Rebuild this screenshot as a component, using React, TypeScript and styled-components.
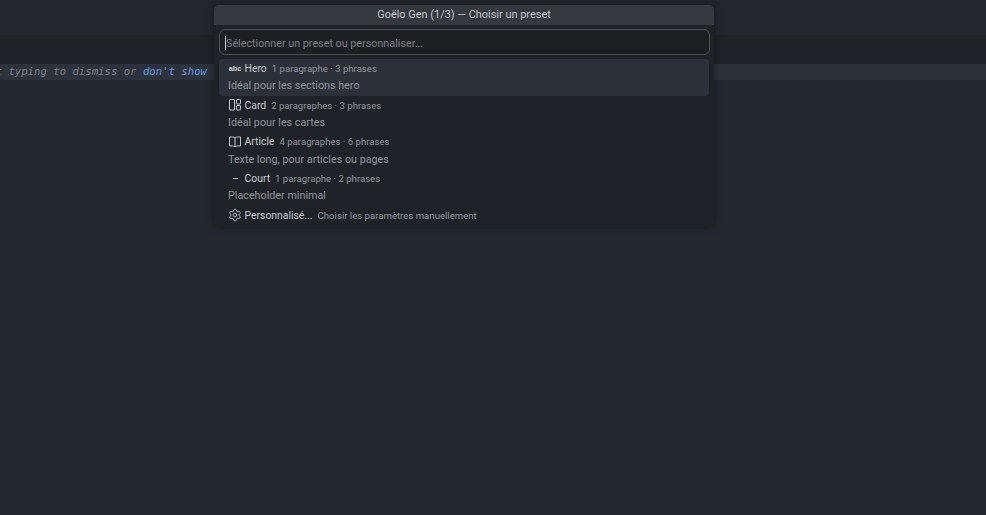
import React from "react";
import styled, { createGlobalStyle } from "styled-components";
import { Settings } from "lucide-react";

const GlobalStyle = createGlobalStyle`
  html, body {
    margin: 0;
    height: 100%;
    background: #23272f;
    overflow: hidden;
  }
`;

const CardIcon = () => (
  <svg width="14" height="14" viewBox="0 0 14 14" fill="none" stroke="currentColor" strokeWidth="1">
    <rect x="1.5" y="1.5" width="5" height="10.5" rx="0.5" />
    <rect x="8.5" y="1.5" width="4" height="4.5" rx="0.5" />
    <rect x="8.5" y="7.5" width="4" height="4.5" rx="0.5" />
  </svg>
);

const BookIcon = () => (
  <svg width="14" height="14" viewBox="0 0 14 14" fill="none" stroke="currentColor" strokeWidth="1">
    <path d="M7 3C6.2 2.3 5.2 2 4 2H1.5v9H4.5c1 0 1.8.2 2.5.8.7-.6 1.5-.8 2.5-.8h3V2H10c-1.2 0-2.2.3-3 1z" />
    <path d="M7 3v8.8" />
  </svg>
);

type Preset = {
  icon: React.ReactNode;
  label: string;
  detail: string;
  description?: string;
  active?: boolean;
};

const presets: Preset[] = [
  {
    icon: <AbcGlyph>abc</AbcGlyph>,
    label: "Hero",
    detail: "1 paragraphe · 3 phrases",
    description: "Idéal pour les sections hero",
    active: true,
  },
  {
    icon: <CardIcon />,
    label: "Card",
    detail: "2 paragraphes · 3 phrases",
    description: "Idéal pour les cartes",
  },
  {
    icon: <BookIcon />,
    label: "Article",
    detail: "4 paragraphes · 6 phrases",
    description: "Texte long, pour articles ou pages",
  },
  {
    icon: <DashGlyph />,
    label: "Court",
    detail: "1 paragraphe · 2 phrases",
    description: "Placeholder minimal",
  },
  {
    icon: <Settings size={14} strokeWidth={1.5} />,
    label: "Personnalisé...",
    detail: "Choisir les paramètres manuellement",
  },
];

export default function App() {
  return (
    <Page>
      <GlobalStyle />
      <TitleBar />
      <TabStrip />
      <EditorLine>
        <Ghost>
          Start typing to dismiss or <GhostLink>don't show</GhostLink>
        </Ghost>
      </EditorLine>
      <Palette>
        <PaletteTitle>Goëlo Gen (1/3) — Choisir un preset</PaletteTitle>
        <InputWrap>
          <Input placeholder="Sélectionner un preset ou personnaliser..." />
          <Caret />
        </InputWrap>
        <List>
          {presets.map((p) => (
            <Row key={p.label} $active={p.active} $tall={!!p.description}>
              <RowMain>
                <IconSlot>{p.icon}</IconSlot>
                <Label>{p.label}</Label>
                <Detail>{p.detail}</Detail>
              </RowMain>
              {p.description && <Description>{p.description}</Description>}
            </Row>
          ))}
        </List>
      </Palette>
    </Page>
  );
}

function AbcGlyph({ children }: { children: React.ReactNode }) {
  return <Abc>{children}</Abc>;
}

function DashGlyph() {
  return <Dash />;
}

const Page = styled.div`
  position: relative;
  width: 986px;
  height: 515px;
  background: #23272f;
  font-family: Roboto, "Liberation Sans", sans-serif;
  overflow: hidden;
`;

const TitleBar = styled.div`
  height: 35px;
  background: #23262f;
`;

const TabStrip = styled.div`
  height: 29px;
  background: #1f2227;
`;

const EditorLine = styled.div`
  height: 16px;
  background: #2d313c;
  display: flex;
  justify-content: flex-end;
  align-items: center;
  padding-right: 779px;
  white-space: nowrap;
`;

const Ghost = styled.span`
  font-family: "DejaVu Sans Mono", monospace;
  font-style: italic;
  font-size: 10.65px;
  line-height: 14px;
  margin-top: -1px;
  color: #7b7f88;
`;

const GhostLink = styled.span`
  color: #4fa3e8;
`;

const Palette = styled.div`
  position: absolute;
  left: 214px;
  top: 5px;
  width: 500px;
  height: 222px;
  background: #1f2227;
  border-radius: 6px;
  box-shadow: 0 0 8px rgba(0, 0, 0, 0.36);
`;

const PaletteTitle = styled.div`
  height: 20px;
  line-height: 20px;
  background: #35383f;
  border-radius: 5px 5px 0 0;
  color: #c4c6cb;
  font-size: 10.95px;
  text-align: center;
`;

const InputWrap = styled.div`
  position: relative;
  padding: 4px 4px 4px 5px;
`;

const Input = styled.input`
  box-sizing: border-box;
  display: block;
  width: 491px;
  height: 26px;
  padding: 3px 6px 0;
  background: #1e1f22;
  border: 1px solid #4b4e53;
  border-radius: 6px;
  color: #c4c6cb;
  font-family: inherit;
  font-size: 10.78px;
  outline: none;

  &::placeholder {
    color: #7d8087;
    opacity: 1;
  }
`;

const Caret = styled.span`
  position: absolute;
  left: 11px;
  top: 11px;
  width: 1px;
  height: 14px;
  background: #c4c6cb;
`;

const List = styled.div`
  margin-left: 5px;
  width: 490px;
`;

const Row = styled.div<{ $active?: boolean; $tall: boolean }>`
  box-sizing: border-box;
  height: ${(p) => (p.$tall ? "36.67px" : "22px")};
  padding: 1.4px 9px 0;
  background: ${(p) => (p.$active ? "#2c3039" : "transparent")};
  border-radius: ${(p) => (p.$active ? "3px" : "0")};
`;

const RowMain = styled.div`
  display: flex;
  align-items: center;
  height: 16px;
`;

const IconSlot = styled.span`
  display: flex;
  align-items: center;
  justify-content: center;
  width: 14px;
  height: 14px;
  margin-right: 2.5px;
  color: #c4c6cb;
`;

const Abc = styled.span`
  font-family: "Liberation Sans", sans-serif;
  font-size: 7.5px;
  font-weight: 700;
  letter-spacing: -0.2px;
  color: #d0d2d6;
`;

const Dash = styled.span`
  width: 5px;
  height: 1px;
  background: #c4c6cb;
`;

const Label = styled.span`
  color: #c9cbd0;
  font-size: 10.4px;
`;

const Detail = styled.span`
  margin-left: 5px;
  color: #92959b;
  font-size: 9.6px;
`;

const Description = styled.div`
  margin-top: 1.9px;
  color: #92959b;
  font-size: 10.78px;
  line-height: 16px;
`;
